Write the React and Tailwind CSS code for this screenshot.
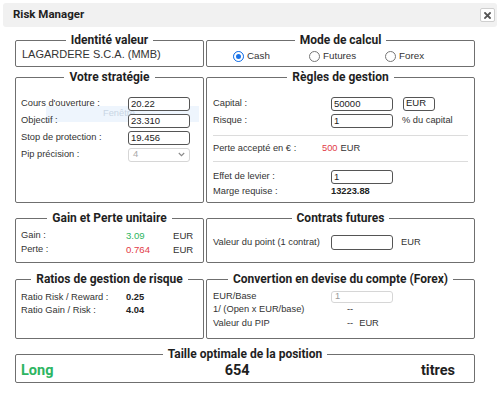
import React from "react";

function Box({ title, className = "", legendClass = "", children }) {
  return (
    <fieldset className={`relative border border-[#6f6f6f] rounded-[2px] min-w-0 ${className}`}>
      <legend
        className={`mx-auto px-[5px] font-['Roboto',sans-serif] font-bold text-[12px] leading-[13px] text-[#1f1f1f] ${legendClass}`}
      >
        {title}
      </legend>
      {children}
    </fieldset>
  );
}

function Field({ value, className = "" }) {
  return (
    <div
      className={`h-[14px] w-[62px] border border-[#555] rounded-[3px] bg-white px-[2px] flex items-center text-[9.5px] text-[#222] leading-none ${className}`}
    >
      {value}
    </div>
  );
}

function Radio({ label, checked }) {
  return (
    <div className="w-[76px] flex items-center gap-[3px]">
      {checked ? (
        <span className="w-[11px] h-[11px] rounded-full border border-[#1a73e8] bg-[#1a73e8] flex items-center justify-center">
          <span className="w-[9px] h-[9px] rounded-full border-[2px] border-white bg-[#1a73e8]" />
        </span>
      ) : (
        <span className="w-[11px] h-[11px] rounded-full border border-[#767676] bg-white" />
      )}
      <span className="text-[9.8px] text-[#333]">{label}</span>
    </div>
  );
}

export default function App() {
  return (
    <div className="w-[500px] h-[398px] bg-white font-['Liberation_Sans',Arial,sans-serif] text-[9.3px] text-[#333] overflow-hidden">
      {/* Header */}
      <div className="pt-[3px] px-[3px]">
        <div className="h-[24px] bg-[#f1f1f1] rounded-[3px] flex items-center justify-between pl-[10px] pr-[2px]">
          <span className="font-['Roboto',sans-serif] font-bold text-[11.5px] text-[#1f1f1f]">Risk Manager</span>
          <button className="w-[15px] h-[14px] border border-[#cfcfcf] rounded-[2px] bg-white flex items-center justify-center">
            <svg width="7" height="7" viewBox="0 0 7 7">
              <path d="M1 1L6 6M6 1L1 6" stroke="#555" strokeWidth="1.8" strokeLinecap="square" />
            </svg>
          </button>
        </div>
      </div>

      <div className="pl-[15px] w-[475px]">
        {/* Row 1 */}
        <div className="mt-[7px] grid grid-cols-[189px_269px] gap-x-[2px]">
          <Box title="Identité valeur" className="h-[33px]">
            <div className="mt-[1px] pl-[6px] text-[11px] leading-[13px] text-[#333]">LAGARDERE S.C.A. (MMB)</div>
          </Box>
          <Box title="Mode de calcul" className="h-[33px]">
            <div className="mt-[3px] pl-[26px] flex items-center h-[13px]">
              <Radio label="Cash" checked />
              <Radio label="Futures" />
              <Radio label="Forex" />
            </div>
          </Box>
        </div>

        {/* Row 2 */}
        <div className="mt-[4px] grid grid-cols-[189px_269px] gap-x-[2px]">
          <Box title="Votre stratégie" className="h-[132px]">
            <div className="absolute left-[30px] top-[22px] w-[153px] h-[16px] bg-[#eef5fd] flex items-center pl-[57px] text-[9.3px] text-[#c9d6e4]">
              Fenêtre
            </div>
            <div className="relative pt-[11px] pl-[5px]">
              <div className="h-[17px] flex items-center">
                <span className="w-[107px]">Cours d'ouverture :</span>
                <Field value="20.22" />
              </div>
              <div className="h-[17px] flex items-center">
                <span className="w-[107px]">Objectif :</span>
                <Field value="23.310" />
              </div>
              <div className="h-[17px] flex items-center">
                <span className="w-[107px]">Stop de protection :</span>
                <Field value="19.456" />
              </div>
              <div className="h-[17px] flex items-center">
                <span className="w-[107px]">Pip précision :</span>
                <div className="h-[14px] w-[62px] border border-[#d6d6d6] rounded-[3px] bg-white px-[4px] flex items-center justify-between text-[9.5px] text-[#aaa]">
                  <span>4</span>
                  <svg width="7" height="5" viewBox="0 0 7 5">
                    <path d="M0.8 1L3.5 3.7L6.2 1" fill="none" stroke="#888" strokeWidth="1.1" />
                  </svg>
                </div>
              </div>
            </div>
          </Box>
          <Box title="Règles de gestion" className="h-[132px]">
            <div className="pt-[11px] px-[6px]">
              <div className="h-[17px] flex items-center">
                <span className="w-[118px]">Capital :</span>
                <Field value="50000" />
                <div className="ml-[10px] h-[14px] w-[32px] border border-[#555] rounded-[3px] px-[2px] flex items-center text-[9.5px] text-[#222]">EUR</div>
              </div>
              <div className="h-[17px] flex items-center">
                <span className="w-[118px]">Risque :</span>
                <Field value="1" />
                <span className="ml-[9px]">% du capital</span>
              </div>
              <div className="mt-[6px] border-t border-[#dcdcdc]" />
              <div className="mt-[6px] h-[14px] flex items-center">
                <span className="w-[109px]">Perte accepté en € :</span>
                <span className="text-[#e23b48]">500</span>
                <span className="ml-[3px]">EUR</span>
              </div>
              <div className="mt-[5px] border-t border-[#dcdcdc]" />
              <div className="mt-[6px] h-[17px] flex items-center">
                <span className="w-[118px]">Effet de levier :</span>
                <Field value="1" />
              </div>
              <div className="h-[13px] flex items-center">
                <span className="w-[118px]">Marge requise :</span>
                <span className="font-bold text-[#222]">13223.88</span>
              </div>
            </div>
          </Box>
        </div>

        {/* Row 3 */}
        <div className="mt-[9px] grid grid-cols-[189px_269px] gap-x-[2px]">
          <Box title="Gain et Perte unitaire" className="h-[51px]">
            <div className="pt-[4px] pl-[5px]">
              <div className="h-[14px] flex items-center">
                <span className="w-[105px]">Gain :</span>
                <span className="w-[47px] text-[#2db562] text-[9.6px]">3.09</span>
                <span className="text-[9.6px]">EUR</span>
              </div>
              <div className="h-[14px] flex items-center">
                <span className="w-[105px]">Perte :</span>
                <span className="w-[47px] text-[#e23b48] text-[9.6px]">0.764</span>
                <span className="text-[9.6px]">EUR</span>
              </div>
            </div>
          </Box>
          <Box title="Contrats futures" className="h-[51px]">
            <div className="pt-[10px] px-[6px]">
              <div className="h-[15px] flex items-center">
                <span className="w-[118px]">Valeur du point (1 contrat)</span>
                <Field value="" className="h-[15px]" />
                <span className="ml-[8px]">EUR</span>
              </div>
            </div>
          </Box>
        </div>

        {/* Row 4 */}
        <div className="mt-[10px] grid grid-cols-[189px_269px] gap-x-[2px]">
          <Box title="Ratios de gestion de risque" className="h-[66px]">
            <div className="pt-[5px] pl-[5px]">
              <div className="h-[13px] flex items-center">
                <span className="w-[105px]">Ratio Risk / Reward :</span>
                <span className="font-bold text-[#222]">0.25</span>
              </div>
              <div className="h-[14px] flex items-center">
                <span className="w-[105px]">Ratio Gain / Risk :</span>
                <span className="font-bold text-[#222]">4.04</span>
              </div>
            </div>
          </Box>
          <Box title="Convertion en devise du compte (Forex)" className="h-[66px]">
            <div className="pt-[4px] px-[6px]">
              <div className="h-[13px] flex items-center">
                <span className="w-[118px]">EUR/Base</span>
                <div className="h-[12px] w-[62px] border border-[#d6d6d6] rounded-[3px] px-[3px] flex items-center text-[9.3px] text-[#999]">1</div>
              </div>
              <div className="h-[14px] flex items-center">
                <span className="w-[134px]">1/ (Open x EUR/base)</span>
                <span>--</span>
              </div>
              <div className="h-[14px] flex items-center">
                <span className="w-[134px]">Valeur du PIP</span>
                <span>--</span>
                <span className="ml-[6px]">EUR</span>
              </div>
            </div>
          </Box>
        </div>

        {/* Row 5 */}
        <div className="mt-[9px]">
          <Box title="Taille optimale de la position" className="h-[35px]" legendClass="text-[10px] leading-[12px]">
            <div className="mt-[1px] h-[17px] flex items-center justify-between pl-[5px] pr-[19px] font-['Roboto',sans-serif] font-bold text-[14.5px] text-[#1f1f1f]">
              <span className="text-[#2db562]">Long</span>
              <span>654</span>
              <span>titres</span>
            </div>
          </Box>
        </div>
      </div>
    </div>
  );
}
